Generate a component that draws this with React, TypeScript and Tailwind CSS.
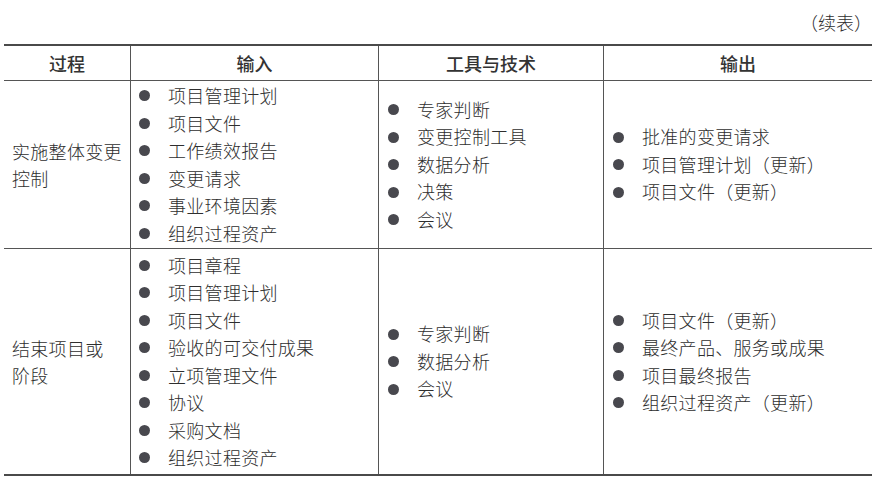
const rows = [
  {
    process: ["实施整体变更", "控制"],
    inputs: ["项目管理计划", "项目文件", "工作绩效报告", "变更请求", "事业环境因素", "组织过程资产"],
    tools: ["专家判断", "变更控制工具", "数据分析", "决策", "会议"],
    outputs: ["批准的变更请求", "项目管理计划（更新）", "项目文件（更新）"],
    height: "h-[168px]",
  },
  {
    process: ["结束项目或", "阶段"],
    inputs: ["项目章程", "项目管理计划", "项目文件", "验收的可交付成果", "立项管理文件", "协议", "采购文档", "组织过程资产"],
    tools: ["专家判断", "数据分析", "会议"],
    outputs: ["项目文件（更新）", "最终产品、服务或成果", "项目最终报告", "组织过程资产（更新）"],
    height: "h-[225px]",
  },
];

const BulletList = ({ items }: { items: string[] }) => (
  <ul className="flex flex-col">
    {items.map((item) => (
      <li key={item} className="flex items-center leading-[27.5px]">
        <span className="mr-[18px] h-[11px] w-[11px] shrink-0 rounded-full bg-[#48484e]" />
        <span className="tracking-[0.3px]">{item}</span>
      </li>
    ))}
  </ul>
);

const App = () => {
  return (
    <div
      className="min-h-screen bg-white text-[18px] font-light text-[#2e2e2e]"
      style={{ fontFamily: '"Noto Sans CJK SC", "Noto Sans", sans-serif' }}
    >
      <div className="ml-1 w-[868px] pt-2">
        <div className="mb-2 text-right leading-[28px]">（续表）</div>

        <div className="border-t-2 border-b-2 border-[#4a4a4a]">
          {/* header */}
          <div className="grid h-[35px] grid-cols-[126px_248px_225px_269px] border-b border-[#555] font-medium text-[#333]">
            <div className="flex items-center justify-center">过程</div>
            <div className="flex items-center justify-center border-l border-[#555]">输入</div>
            <div className="flex items-center justify-center border-l border-[#555]">工具与技术</div>
            <div className="flex items-center justify-center border-l border-[#555]">输出</div>
          </div>

          {rows.map((row, i) => (
            <div
              key={i}
              className={`grid grid-cols-[126px_248px_225px_269px] ${row.height} ${
                i < rows.length - 1 ? "border-b border-[#555]" : ""
              }`}
            >
              <div className="flex flex-col justify-center pl-2 leading-[27px] tracking-[0.3px]">
                {row.process.map((p) => (
                  <span key={p}>{p}</span>
                ))}
              </div>
              <div className="flex items-center border-l border-[#555] pl-2">
                <BulletList items={row.inputs} />
              </div>
              <div className="flex items-center border-l border-[#555] pl-[9px]">
                <BulletList items={row.tools} />
              </div>
              <div className="flex items-center border-l border-[#555] pl-[9px]">
                <BulletList items={row.outputs} />
              </div>
            </div>
          ))}
        </div>
      </div>
    </div>
  );
};

export default App;
